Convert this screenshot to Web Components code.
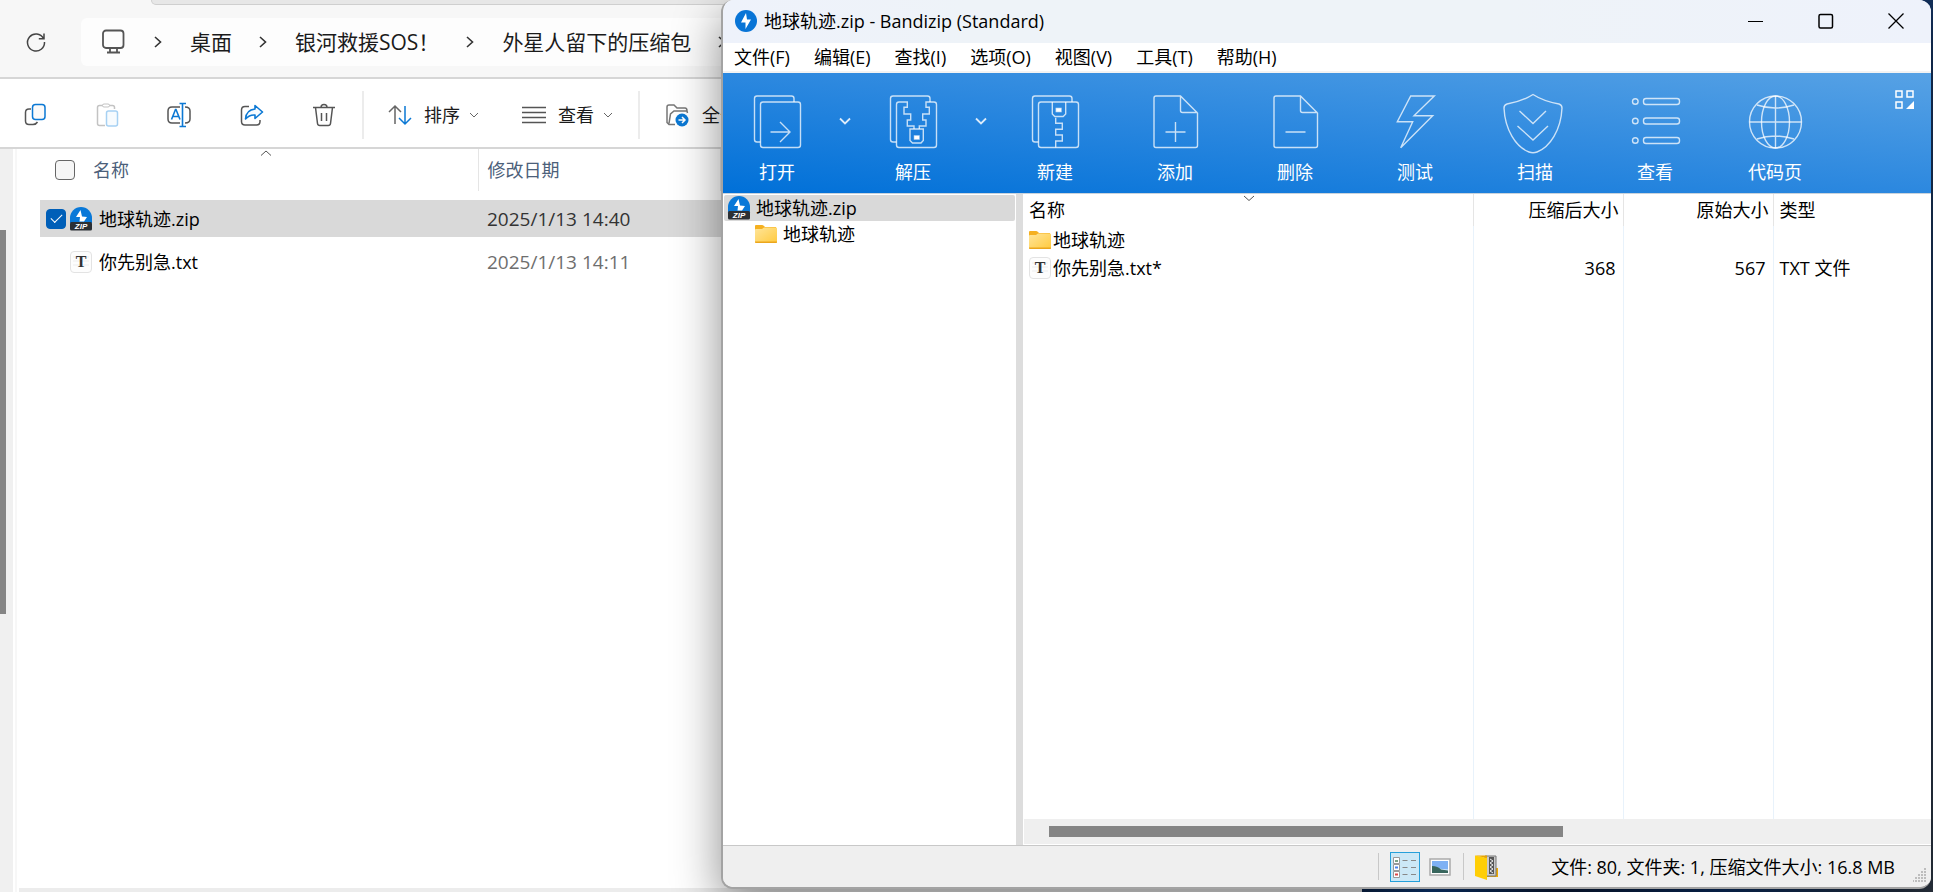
<!DOCTYPE html>
<html lang="zh-CN">
<head>
<meta charset="utf-8">
<title>地球轨迹.zip - Bandizip (Standard)</title>
<style>
    body {
        margin: 0;
        height: 100vh;
        overflow: hidden;
        font-family: "Open Sans", "Noto Sans CJK SC", sans-serif;
        font-size: 18px;
        font-weight: 370;
        line-height: 24px;
        color: #000;
    }
</style>
</head>
<body>
<desktop-area>
    <explorer-window slot="back">
        <address-bar slot="address">
            <path-crumb>桌面</path-crumb>
            <path-crumb>银河救援SOS！</path-crumb>
            <path-crumb>外星人留下的压缩包</path-crumb>
        </address-bar>
        <command-bar slot="commands"></command-bar>
        <explorer-list></explorer-list>
    </explorer-window>
    <archive-window slot="front" heading="地球轨迹.zip - Bandizip (Standard)">
        <menu-bar slot="menu" items="文件(F),编辑(E),查找(I),选项(O),视图(V),工具(T),帮助(H)"></menu-bar>
        <tool-bar slot="tools">
            <tool-button icon="open" menu>打开</tool-button>
            <tool-button icon="extract" menu>解压</tool-button>
            <tool-button icon="create">新建</tool-button>
            <tool-button icon="add">添加</tool-button>
            <tool-button icon="remove">删除</tool-button>
            <tool-button icon="test">测试</tool-button>
            <tool-button icon="scan">扫描</tool-button>
            <tool-button icon="list">查看</tool-button>
            <tool-button icon="globe">代码页</tool-button>
        </tool-bar>
        <archive-tree slot="tree"></archive-tree>
        <archive-list></archive-list>
        <status-bar slot="status">文件: 80, 文件夹: 1, 压缩文件大小: 16.8 MB</status-bar>
    </archive-window>
</desktop-area>

<script>
const BACK_PAGE = '<path d="M13.500 50H10q-2.500 0-2.500-2.500V6.500Q7.500 4 10 4h34.500q2.500 0 2.500 2.500V10"/>';

// name: [width, height, markup]
const ICONS = {
    open: [60, 60, `<g class="line">${BACK_PAGE}<rect x="13.500" y="10" width="40" height="45.500" rx="2.500"/><path d="M23.500 40H43M33 30l10 10-10 10"/></g>`],
    extract: [60, 60, `<g class="line">${BACK_PAGE}<path d="M31 37v-3h-6.700v-6h3.400v-6H21v-6.700h3.300V10H16q-2.500 0-2.500 2.500V53q0 2.500 2.500 2.500h35q2.500 0 2.500-2.500V12.500Q53.500 10 51 10h-8v5.300h3.300V22h-6.600v6H43v6h-6.700v3"/><path d="M27 37h13.300v11.500L38 51h-8.500L27 48.500z"/><path d="M31.500 44h4.500v3h-4.500z" fill="#fff"/></g>`],
    create: [60, 60, `<g class="line">${BACK_PAGE}<rect x="13.500" y="10" width="40" height="45.500" rx="2.500"/><path d="M27.300 10v12l2.500 2.500h8.400l2.500-2.500V10"/><path d="M31.300 16.500H36v3h-4.700z" fill="#fff"/><path d="M30.700 25.700v5.600h6.600v6h-6.600V43h6.600v6h-6.600v6.500"/></g>`],
    add: [60, 60, '<g class="line"><path d="M35.500 4H11Q9 4 9 6v47.500q0 2 2 2h39.500q2 0 2-2V21zv14.500q0 2 2 2h15M30.500 30v20M20.500 40h20"/></g>'],
    remove: [60, 60, '<g class="line"><path d="M35.500 4H11Q9 4 9 6v47.500q0 2 2 2h39.500q2 0 2-2V21zv14.500q0 2 2 2h15M20.500 40h20"/></g>'],
    test: [60, 60, '<g class="line"><path d="M25.700 4h23.600L29 23.700h18.700l-32 32 12-26H12.300z"/></g>'],
    scan: [60, 60, '<g class="line"><path d="M28 2.500C35 7 43 10 54 12q3 1 3 4C56 38 45 55 32 60q-4 1.500-8 0C11 55 0 38-1 16q0-3 3-4C13 10 21 7 28 2.500zM14.500 19 28 31.500 41 19M12.500 34 28 48l15-14"/></g>'],
    list: [60, 60, '<g class="line"><circle cx="10.300" cy="9.500" r="2.800"/><circle cx="10.300" cy="29" r="2.800"/><circle cx="10.300" cy="48.500" r="2.800"/><rect x="18.500" y="6.500" width="36" height="6" rx="2.500"/><rect x="18.500" y="26" width="36" height="6" rx="2.500"/><rect x="18.500" y="45.500" width="36" height="6" rx="2.500"/></g>'],
    globe: [60, 60, '<g class="line"><circle cx="30.500" cy="30" r="26"/><ellipse cx="30.500" cy="30" rx="14" ry="26"/><path d="M30.500 4v52M4.500 30h52M12 13q18 6 37 0M12 47q18-6 37 0"/></g>'],
    customize: [20, 20, '<g fill="none" stroke="#fff" stroke-width="1.500"><path d="M1 1h6v6H1zM12 1h6v6h-6zM1 12h6v6H1z"/><path d="M19 11v8h-8z" fill="#fff" stroke="none"/></g>'],
    drop: [12, 8, '<path d="m1 1.500 5 5 5-5" fill="none" stroke="#dcebfa" stroke-width="1.800"/>'],

    bandizip: [22, 22, '<circle cx="11" cy="11" r="11" fill="#0874d6"/><path d="M11 3 6 12.500h4.500L10.500 19 16 9.500h-4z" fill="#fff"/>'],
    zip: [24, 24, '<path d="M1 16V11a11 11 0 0 1 22 0v5z" fill="#0878d8"/><path d="m11.500 3-4.500 7h4l-.500 4.500h4.500l3-4.500-5-.500z" fill="#fff"/><rect x="1" y="15" width="22" height="8.500" rx="1.500" fill="#2b2f34"/><text x="12" y="22" text-anchor="middle" font-family="Liberation Sans" font-size="8" font-weight="700" font-style="italic" fill="#fff">ZIP</text>'],
    txt: [24, 24, '<rect x="1.500" y="1.500" width="21" height="21" rx="3.500" fill="#fdfdfd" stroke="#e3e3e3"/><path d="M4 7h16M4 11h16M4 15h16" stroke="#ededed"/><text x="12" y="17" text-anchor="middle" font-family="Liberation Serif" font-size="16" font-weight="700" fill="#333">T</text>'],
    folder: [24, 20, '<defs><linearGradient id="f" x2="1" y2="1"><stop stop-color="#ffe59a"/><stop offset="1" stop-color="#ffca3e"/></linearGradient></defs><path d="M1 2q0-1 1-1h6q1 0 2 1l1 1h11v13H1z" fill="#f5b020"/><path d="M1 6q0-1 1-1h6l2-1.500h12q1 0 1 1V18q0 1-1 1H2q-1 0-1-1z" fill="url(#f)"/><path d="M1 17.500h22v.500q0 1-1 1H2q-1 0-1-1z" fill="#eba61c"/>'],

    refresh: [22, 22, '<path d="M18.500 7.500A8.500 8.500 0 1 0 19.500 11M19 2.500v5.200h-5.200" fill="none" stroke="#444" stroke-width="1.500"/>'],
    monitor: [26, 26, '<g fill="none" stroke="#555" stroke-width="1.800"><rect x="2" y="1.500" width="20.500" height="17.500" rx="3"/><path d="M9 19v4M16 19v4M6 23.500h13"/></g>'],
    copy: [24, 24, '<path d="M7 6H5Q1.500 6 1.500 9.500V18Q1.500 21.500 5 21.500h4q3 0 4.500-2.500" fill="none" stroke="#555" stroke-width="1.500"/><rect x="8.500" y="1.500" width="12.500" height="15" rx="3" fill="#fafafa" stroke="#0b78d4" stroke-width="1.500"/>'],
    paste: [24, 24, '<path d="M8 2.500H3.500q-2 0-2 2v16q0 2 2 2H9M13 2.500h3.500q2 0 2 2V6" fill="none" stroke="#c3c3c3" stroke-width="1.500"/><rect x="6.500" y="1" width="7" height="3" rx="1.500" fill="#fff" stroke="#c3c3c3"/><rect x="10.500" y="8" width="11" height="15" rx="2" fill="#f7fbfe" stroke="#a7d1f3" stroke-width="1.500"/>'],
    rename: [26, 26, '<path d="M13 5H5Q1 5 1 9v8q0 4 4 4h8M18 5q5 0 5 4v8q0 4-5 4" fill="none" stroke="#555" stroke-width="1.500"/><path d="m4.500 17.500 4-10h.500l4 10M6 14.500h5.500M15.500 1.500v23M12.500 1.500h6.500M12.500 24.500h6.500" fill="none" stroke="#0b78d4" stroke-width="1.600"/>'],
    share: [24, 24, '<path d="M9 3.500H5Q1.500 3.500 1.500 7v11.500Q1.500 22 5 22h11.500q3.500 0 3.500-3.500V17" fill="none" stroke="#555" stroke-width="1.500"/><path d="M15 2.500 22.500 9 15 15.500V12q-5.500-.500-9.500 4 .500-9 9.500-10z" fill="#f7fbff" stroke="#0b78d4" stroke-width="1.600" stroke-linejoin="round"/>'],
    trash: [24, 24, '<path d="M1 4.500h22M9 4.500q0-3 3-3t3 3M3.500 4.500 5.500 20.500q.300 2 2.300 2h8.400q2 0 2.300-2l2-16M9.500 10v8M14.500 10v8" fill="none" stroke="#555" stroke-width="1.500"/>'],
    sort: [24, 24, '<path d="M7 21V3M1 9l6-6 6 6" fill="none" stroke="#666" stroke-width="1.500"/><path d="M17 3v18M11 15l6 6 6-6" fill="none" stroke="#0b78d4" stroke-width="1.500"/>'],
    view: [24, 24, '<path d="M0 4.500h24M0 9.500h24M0 14.500h24M0 19.500h24" stroke="#555" stroke-width="1.500"/>'],
    extractAll: [26, 24, '<path d="M11 21.500H5l-2-2V4q0-2 2-2h5l3 3h8q2 0 2 3H10L6.500 11 5 20.500M10 8l13 0 .500 2" fill="none" stroke="#777" stroke-width="1.500"/><circle cx="18" cy="17" r="6.500" fill="#0b78d4"/><path d="M14.500 17h6.500M18 14l3 3-3 3" fill="none" stroke="#fff" stroke-width="1.500"/>'],
    chevronRight: [10, 14, '<path d="m2 2 5.500 5L2 12" fill="none" stroke="#333" stroke-width="1.600"/>'],
    chevronDown: [10, 8, '<path d="m1 2 4 4 4-4" fill="none" stroke="#666"/>'],
    chevronSort: [12, 8, '<path d="m1 2 5 4.500L11 2" fill="none" stroke="#555"/>'],
    chevronUp: [12, 8, '<path d="M1 6.500 6 2l5 4.500" fill="none" stroke="#555"/>'],

    minimize: [16, 16, '<path d="M0 8.500h15" stroke="#000"/>'],
    maximize: [16, 16, '<rect x="1" y="1.500" width="13.500" height="13.500" rx="1.500" fill="none" stroke="#000" stroke-width="1.500"/>'],
    close: [16, 16, '<path d="m.500.500 15 15m0-15-15 15" stroke="#000" stroke-width="1.300"/>'],

    details: [26, 24, '<g fill="#fff" stroke="#999"><path d="M1.500 2.500h6v6h-6zM1.500 9.500h6v6h-6zM1.500 16.500h6v6h-6z"/></g><path d="M3 5h3v2H3z" fill="#7ba287"/><path d="M3 11.500h3v2H3z" fill="#4b83ea"/><path d="M3 18.500h3v2H3z" fill="#dd4545"/><path d="M10.500 5.500h5M19 5.500h5M10.500 12.500h5M19 12.500h5M10.500 19.500h5M19 19.500h5" stroke="#888"/>'],
    picture: [22, 18, '<rect x="1" y="1" width="20" height="16" fill="#fff" stroke="#aaa" stroke-width="1.500"/><path d="M3 3h16v12H3z" fill="#7eb1f4"/><path d="M3 10q6-1 9 1l7 .500V15H3z" fill="#dff0fa"/><path d="M3 8q6 0 9 3.500l7 1V15H3z" fill="#38665d"/>'],
    archive: [24, 26, '<path d="M10 14h13v9H10z" fill="#eda900"/><path d="M10 2h11v20H10z" fill="#c9c9c9" stroke="#777"/><path d="M14 3h5v17h-5z" fill="#555"/><path d="m15 5 3 2-3 2 3 2-3 2 3 2-3 2 3 2" fill="none" stroke="#eee"/><path d="M0 1.500 12 4v22L0 22z" fill="#ffce05"/><path d="M0 1.500h12V4z" fill="#e9a500"/>'],
    grip: [14, 16, '<path d="M11 1h2v2h-2zM8 4h2v2H8zM11 4h2v2h-2zM5 7h2v2H5zM8 7h2v2H8zM11 7h2v2h-2zM2 10h2v2H2zM5 10h2v2H5zM8 10h2v2H8zM11 10h2v2h-2zM0 13h1v2H0zM2 13h2v2H2zM5 13h2v2H5zM8 13h2v2H8zM11 13h2v2h-2z" fill="#bdbdbd"/>']
};

// Shared by every element: reset and a render into an open root
class BaseElement extends HTMLElement {
    constructor() {
        super();
        this.attachShadow({ mode: 'open' });
    }

    connectedCallback() {
        const template = document.createElement('template');
        template.innerHTML = `
            <style>
                :host, * { box-sizing: border-box; }
                button {
                    font: inherit;
                    color: inherit;
                    background: none;
                    border: 0;
                    padding: 0;
                    margin: 0;
                }
            </style>
            ${this.view()}
        `;
        this.shadowRoot.replaceChildren(template.content.cloneNode(true));
    }
}

class UiIcon extends BaseElement {
    view() {
        const [w, h, body] = ICONS[this.getAttribute('name')];
        return `
            <style>
                :host { display: block; flex: none; }
                svg { display: block; overflow: visible; }
                .line {
                    fill: none;
                    stroke: rgba(255, 255, 255, 0.75);
                    stroke-width: 1.400;
                }
            </style>
            <svg width="${w}" height="${h}" viewBox="0 0 ${w} ${h}" aria-hidden="true">${body}</svg>
        `;
    }
}

class DesktopArea extends BaseElement {
    view() {
        return `
            <style>
                :host {
                    display: block;
                    position: relative;
                    height: 100vh;
                    overflow: hidden;
                    background: linear-gradient(100deg, #0b1526 0 70%, #0c3a7c 76%, #091a38 82%, #0b2f66 90%, #2b3440);
                }
                ::slotted([slot="back"]) {
                    position: absolute;
                    inset: 0 571px 0 0;
                }
                ::slotted([slot="front"]) {
                    position: absolute;
                    inset: 0 2px 3px 721px;
                }
            </style>
            <slot name="back"></slot>
            <slot name="front"></slot>
        `;
    }
}

class ExplorerWindow extends BaseElement {
    view() {
        return `
            <style>
                :host {
                    display: flex;
                    flex-direction: column;
                    background: #fff;
                }
                .tabs {
                    height: 5px;
                    background: #f7f7f7;
                }
                .tabs div {
                    height: 5px;
                    margin-left: 151px;
                    background: #e7e7e7;
                    border: 1px solid #cfcfcf;
                    border-top: 0;
                    border-radius: 0 0 0 5px;
                }
                .content {
                    flex: 1;
                    display: flex;
                    min-height: 0;
                }
                .nav {
                    width: 13px;
                    background: #f0f0f0;
                    padding-top: 81px;
                }
                .thumb {
                    width: 6px;
                    height: 58%;
                    max-height: 384px;
                    background: #858585;
                }
                .pane {
                    flex: 1;
                    display: flex;
                    flex-direction: column;
                    margin-left: 2px;
                    border-left: 2px solid #f7f7f7;
                }
                ::slotted(explorer-list) { flex: 1; }
                .foot {
                    height: 4px;
                    margin-left: 2px;
                    background: #ececec;
                }
            </style>
            <div class="tabs"><div></div></div>
            <slot name="address"></slot>
            <slot name="commands"></slot>
            <div class="content">
                <div class="nav"><div class="thumb"></div></div>
                <div class="pane">
                    <slot></slot>
                    <div class="foot"></div>
                </div>
            </div>
        `;
    }
}

class AddressBar extends BaseElement {
    view() {
        return `
            <style>
                :host {
                    display: flex;
                    align-items: center;
                    height: 74px;
                    background: #f7f7f7;
                    border-bottom: 2px solid #d6d6d6;
                    padding: 2px 0 0 25px;
                }
                .path {
                    flex: 1;
                    display: flex;
                    align-items: center;
                    height: 48px;
                    margin-left: 34px;
                    padding-left: 20px;
                    border-radius: 6px 0 0 6px;
                    background: #fdfdfd;
                    overflow: hidden;
                }
                .end { margin-left: 26px; }
            </style>
            <button aria-label="刷新"><ui-icon name="refresh"></ui-icon></button>
            <nav class="path">
                <ui-icon name="monitor"></ui-icon>
                <slot></slot>
                <ui-icon class="end" name="chevronRight"></ui-icon>
            </nav>
        `;
    }
}

class PathCrumb extends BaseElement {
    view() {
        return `
            <style>
                :host {
                    display: flex;
                    align-items: center;
                    gap: 27px;
                    margin-left: 26px;
                    font-size: 21px;
                    color: #1b1b1b;
                    white-space: nowrap;
                }
                a { color: inherit; text-decoration: none; }
            </style>
            <ui-icon name="chevronRight"></ui-icon>
            <a href="#"><slot></slot></a>
        `;
    }
}

class CommandBar extends BaseElement {
    view() {
        const icons = [['copy', '复制'], ['paste', '粘贴'], ['rename', '重命名'], ['share', '共享'], ['trash', '删除']];
        return `
            <style>
                :host {
                    display: flex;
                    align-items: center;
                    height: 70px;
                    padding-top: 4px;
                    border-bottom: 2px solid #d6d6d6;
                    color: #1b1b1b;
                    white-space: nowrap;
                    overflow: hidden;
                }
                .square {
                    display: grid;
                    place-items: center;
                    width: 72px;
                    height: 48px;
                }
                .wide {
                    display: flex;
                    align-items: center;
                    gap: 9px;
                    width: 134px;
                }
                .wide ui-icon:first-child { margin-right: 3px; }
                .divider {
                    width: 2px;
                    height: 48px;
                    background: #ececec;
                    margin: 0 24px 0 2px;
                }
                .divider.last { margin-left: -18px; }
            </style>
            ${icons.map(([icon, label]) => `<button class="square" aria-label="${label}"><ui-icon name="${icon}"></ui-icon></button>`).join('')}
            <div class="divider"></div>
            <button class="wide"><ui-icon name="sort"></ui-icon>排序<ui-icon name="chevronDown"></ui-icon></button>
            <button class="wide"><ui-icon name="view"></ui-icon>查看<ui-icon name="chevronDown"></ui-icon></button>
            <div class="divider last"></div>
            <button class="wide"><ui-icon name="extractAll"></ui-icon>全部</button>
        `;
    }
}

class ExplorerList extends BaseElement {
    view() {
        const files = [
            { icon: 'zip', name: '地球轨迹.zip', date: '2025/1/13 14:40', selected: true },
            { icon: 'txt', name: '你先别急.txt', date: '2025/1/13 14:11', selected: false }
        ];
        return `
            <style>
                :host { display: block; padding-left: 23px; }
                table {
                    width: 100%;
                    table-layout: fixed;
                    border-collapse: collapse;
                    text-align: left;
                }
                th {
                    position: relative;
                    height: 42px;
                    padding: 0 0 0 9px;
                    font-weight: inherit;
                    color: #4c607a;
                    border-right: 1px solid #e5e5e5;
                }
                th:first-child { width: 438px; }
                th:nth-child(2) { width: 242px; }
                td { height: 37px; padding: 0 0 0 9px; }
                .gap td { height: 9px; }
                .gap.small td { height: 6px; }
                .name { padding-left: 6px; }
                .name label, .head {
                    display: flex;
                    align-items: center;
                    gap: 3px;
                }
                .name span { margin-left: 3px; }
                .head { gap: 18px; padding-left: 6px; }
                .arrow {
                    position: absolute;
                    top: 0;
                    left: 220px;
                }
                .date { color: #6e6e6e; font-size: 19px; }
                .selected { background: #d9d9d9; }
                .selected .date { color: #333; }
                input {
                    appearance: none;
                    display: grid;
                    place-items: center;
                    width: 20px;
                    height: 20px;
                    margin: 0;
                    border: 1px solid #666;
                    border-radius: 4px;
                    background: #f6f6f6;
                }
                input:checked {
                    background: #005fb8;
                    border-color: #005fb8;
                }
                input:checked::before {
                    content: "";
                    width: 10px;
                    height: 5px;
                    margin-top: -3px;
                    border: solid #fff;
                    border-width: 0 0 1px 1px;
                    transform: rotate(-45deg);
                }
                .name input:not(:checked) { opacity: 0; }
            </style>
            <table>
                <thead>
                    <tr>
                        <th>
                            <div class="head"><input type="checkbox" aria-label="全选">名称</div>
                            <ui-icon class="arrow" name="chevronUp"></ui-icon>
                        </th>
                        <th>修改日期</th>
                        <th></th>
                    </tr>
                </thead>
                <tbody>
                    <tr class="gap"><td colspan="3"></td></tr>
                    ${files.map((file) => `
                        <tr class="${file.selected ? 'selected' : ''}">
                            <td class="name">
                                <label>
                                    <input type="checkbox" ${file.selected ? 'checked' : ''}>
                                    <ui-icon name="${file.icon}"></ui-icon>
                                    <span>${file.name}</span>
                                </label>
                            </td>
                            <td class="date">${file.date}</td>
                            <td></td>
                        </tr>
                        <tr class="gap small"><td colspan="3"></td></tr>
                    `).join('')}
                </tbody>
            </table>
        `;
    }
}

class ArchiveWindow extends BaseElement {
    view() {
        return `
            <style>
                :host {
                    display: flex;
                    flex-direction: column;
                    border: 2px solid #a3a3a3;
                    border-width: 0 0 2px 2px;
                    border-radius: 12px;
                    background: #fff;
                    overflow: hidden;
                    box-shadow: 0 16px 48px rgba(0, 0, 0, 0.45);
                }
                header {
                    display: flex;
                    align-items: center;
                    height: 43px;
                    background: linear-gradient(90deg, #eef2fb, #eef3f8 20% 65%, #eef2fb);
                    padding: 0 0 2px 12px;
                }
                h1 {
                    flex: 1;
                    margin: 0 0 0 7px;
                    font-size: 18px;
                    font-weight: inherit;
                }
                header button {
                    display: grid;
                    place-items: center;
                    width: 70px;
                    height: 41px;
                }
                .body {
                    flex: 1;
                    display: flex;
                    min-height: 0;
                    border-top: 1px solid #c9d3dc;
                }
                ::slotted([slot="tree"]) { width: 293px; }
                .splitter { width: 7px; background: #ddd; }
                ::slotted(archive-list) { flex: 1; }
            </style>
            <header>
                <ui-icon name="bandizip"></ui-icon>
                <h1>${this.getAttribute('heading')}</h1>
                <button aria-label="最小化"><ui-icon name="minimize"></ui-icon></button>
                <button aria-label="最大化"><ui-icon name="maximize"></ui-icon></button>
                <button aria-label="关闭"><ui-icon name="close"></ui-icon></button>
            </header>
            <slot name="menu"></slot>
            <slot name="tools"></slot>
            <div class="body">
                <slot name="tree"></slot>
                <div class="splitter"></div>
                <slot></slot>
            </div>
            <slot name="status"></slot>
        `;
    }
}

class MenuBar extends BaseElement {
    view() {
        const items = this.getAttribute('items').split(',');
        return `
            <style>
                :host {
                    display: flex;
                    align-items: center;
                    gap: 24px;
                    height: 30px;
                    padding-left: 11px;
                    border-bottom: 2px solid #f3f3f3;
                }
            </style>
            ${items.map((item) => `<button>${item}</button>`).join('')}
        `;
    }
}

class ToolBar extends BaseElement {
    view() {
        return `
            <style>
                :host {
                    display: flex;
                    height: 120px;
                    background: linear-gradient(to top right, #0070d8, #2c88df 50%, #57a2e5);
                    color: #fff;
                }
                .customize {
                    align-self: flex-start;
                    margin: 17px 16px 0 auto;
                }
            </style>
            <slot></slot>
            <button class="customize" aria-label="自定义"><ui-icon name="customize"></ui-icon></button>
        `;
    }
}

class ToolButton extends BaseElement {
    view() {
        const hasMenu = this.hasAttribute('menu');
        return `
            <style>
                :host { display: flex; }
                .main {
                    display: flex;
                    flex-direction: column;
                    align-items: center;
                    gap: 8px;
                    width: ${hasMenu ? 108 : 120}px;
                    padding-top: 19px;
                }
                .drop {
                    display: grid;
                    justify-items: center;
                    width: 28px;
                    padding-top: 44px;
                    align-content: start;
                }
            </style>
            <button class="main"><ui-icon name="${this.getAttribute('icon')}"></ui-icon><slot></slot></button>
            ${hasMenu ? '<button class="drop" aria-label="更多"><ui-icon name="drop"></ui-icon></button>' : ''}
        `;
    }
}

class ArchiveTree extends BaseElement {
    view() {
        return `
            <style>
                :host { display: block; padding: 1px; }
                ul { list-style: none; margin: 0; padding: 0; }
                li {
                    display: flex;
                    align-items: center;
                    gap: 5px;
                    height: 26px;
                    padding-left: 3px;
                    border-radius: 2px;
                }
                .selected { background: #d9d9d9; }
                .child { padding-left: 30px; }
            </style>
            <ul>
                <li class="selected"><ui-icon name="zip"></ui-icon>地球轨迹.zip</li>
                <li class="child"><ui-icon name="folder"></ui-icon>地球轨迹</li>
            </ul>
        `;
    }
}

class ArchiveList extends BaseElement {
    view() {
        return `
            <style>
                :host {
                    display: flex;
                    flex-direction: column;
                    min-width: 0;
                }
                .scroll { flex: 1; display: flex; }
                table {
                    width: 100%;
                    height: 100%;
                    table-layout: fixed;
                    border-collapse: collapse;
                    text-align: left;
                }
                th, td {
                    height: 28px;
                    padding: 0 7px 0 6px;
                    font-weight: inherit;
                    border-right: 1px solid #e8f2fb;
                }
                th {
                    position: relative;
                    height: 32px;
                    padding-right: 4px;
                    border-color: #e5e5e5;
                }
                th:nth-child(1) { width: 450px; }
                th:nth-child(2), th:nth-child(3) { width: 150px; }
                .num { text-align: right; }
                th:last-child, td:last-child { border: 0; }
                .file { display: flex; align-items: center; gap: 1px; margin-left: -1px; }
                .rest td { height: auto; }
                .arrow {
                    position: absolute;
                    top: 0;
                    left: 220px;
                }
                .bar {
                    height: 25px;
                    margin: 0 0 1px 1px;
                    padding: 7px 25px;
                    background: #efefef;
                }
                .thumb {
                    width: 60%;
                    height: 11px;
                    background: #858585;
                }
            </style>
            <div class="scroll">
                <table>
                    <thead>
                        <tr>
                            <th>名称<ui-icon class="arrow" name="chevronSort"></ui-icon></th>
                            <th class="num">压缩后大小</th>
                            <th class="num">原始大小</th>
                            <th>类型</th>
                        </tr>
                    </thead>
                    <tbody>
                        <tr>
                            <td><div class="file"><ui-icon name="folder"></ui-icon>地球轨迹</div></td>
                            <td></td>
                            <td></td>
                            <td></td>
                        </tr>
                        <tr>
                            <td><div class="file"><ui-icon name="txt"></ui-icon>你先别急.txt*</div></td>
                            <td class="num">368</td>
                            <td class="num">567</td>
                            <td>TXT 文件</td>
                        </tr>
                        <tr class="rest"><td></td><td></td><td></td><td></td></tr>
                    </tbody>
                </table>
            </div>
            <div class="bar"><div class="thumb"></div></div>
        `;
    }
}

class StatusBar extends BaseElement {
    view() {
        return `
            <style>
                :host {
                    display: flex;
                    align-items: center;
                    justify-content: flex-end;
                    height: 42px;
                    border-top: 1px solid #c8c8c8;
                    background: #efefef;
                    padding-right: 4px;
                }
                .line {
                    width: 1px;
                    height: 27px;
                    margin: 0 11px 0 8px;
                    background: #c8c8c8;
                }
                button {
                    display: grid;
                    place-items: center;
                    width: 30px;
                    height: 30px;
                }
                .on {
                    background: #cce8f6;
                    border: 1px solid #26a0da;
                    margin-right: 5px;
                }
                .text { margin: 0 18px 0 52px; }
                .grip { align-self: flex-end; margin-bottom: 4px; }
            </style>
            <div class="line"></div>
            <button class="on" aria-label="详细信息"><ui-icon name="details"></ui-icon></button>
            <button aria-label="缩略图"><ui-icon name="picture"></ui-icon></button>
            <div class="line"></div>
            <ui-icon name="archive"></ui-icon>
            <span class="text"><slot></slot></span>
            <ui-icon class="grip" name="grip"></ui-icon>
        `;
    }
}

customElements.define('ui-icon', UiIcon);
customElements.define('desktop-area', DesktopArea);
customElements.define('explorer-window', ExplorerWindow);
customElements.define('address-bar', AddressBar);
customElements.define('path-crumb', PathCrumb);
customElements.define('command-bar', CommandBar);
customElements.define('explorer-list', ExplorerList);
customElements.define('archive-window', ArchiveWindow);
customElements.define('menu-bar', MenuBar);
customElements.define('tool-bar', ToolBar);
customElements.define('tool-button', ToolButton);
customElements.define('archive-tree', ArchiveTree);
customElements.define('archive-list', ArchiveList);
customElements.define('status-bar', StatusBar);
</script>
</body>
</html>
